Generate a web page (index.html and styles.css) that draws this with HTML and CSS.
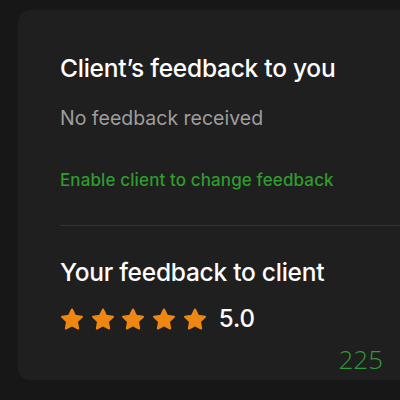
FILE: index.html
```html
<!DOCTYPE html>
<html lang="en">
<head>
<meta charset="utf-8">
<link rel="stylesheet" href="styles.css">
</head>
<body>
  <section class="card">
    <div class="block">
      <h2 class="title">Client’s feedback to you</h2>
      <p class="muted">No feedback received</p>
      <a class="link" href="#">Enable client to change feedback</a>
    </div>
    <hr class="divider">
    <div class="block">
      <h2 class="title title-second">Your feedback to client</h2>
      <div class="rating">
        <div class="stars">
          <svg class="star" viewBox="0 0 24 24"><path d="M12 2.5L15.1 8.7 21.99 9.76 16.98 14.62 18.17 21.49 12 18.3 5.83 21.49 7.02 14.62 2.01 9.76 8.9 8.7Z"/></svg>
          <svg class="star" viewBox="0 0 24 24"><path d="M12 2.5L15.1 8.7 21.99 9.76 16.98 14.62 18.17 21.49 12 18.3 5.83 21.49 7.02 14.62 2.01 9.76 8.9 8.7Z"/></svg>
          <svg class="star" viewBox="0 0 24 24"><path d="M12 2.5L15.1 8.7 21.99 9.76 16.98 14.62 18.17 21.49 12 18.3 5.83 21.49 7.02 14.62 2.01 9.76 8.9 8.7Z"/></svg>
          <svg class="star" viewBox="0 0 24 24"><path d="M12 2.5L15.1 8.7 21.99 9.76 16.98 14.62 18.17 21.49 12 18.3 5.83 21.49 7.02 14.62 2.01 9.76 8.9 8.7Z"/></svg>
          <svg class="star" viewBox="0 0 24 24"><path d="M12 2.5L15.1 8.7 21.99 9.76 16.98 14.62 18.17 21.49 12 18.3 5.83 21.49 7.02 14.62 2.01 9.76 8.9 8.7Z"/></svg>
        </div>
        <span class="score">5.0</span>
      </div>
    </div>
    <div class="footer">
      <span class="count">225</span>
    </div>
  </section>
</body>
</html>
```
FILE: styles.css
```css
html, body {
  margin: 0;
  padding: 0;
  background: #171717;
  width: 400px;
  height: 400px;
  overflow: hidden;
  font-family: Inter, "Liberation Sans", sans-serif;
}

.card {
  box-sizing: border-box;
  margin: 10px 0 0 18px;
  width: 400px;
  height: 370px;
  background: #1f1f1f;
  border-radius: 12px;
  padding-top: 44px;
  display: flex;
  flex-direction: column;
}

.block {
  padding-left: 42px;
}

.title {
  margin: 0;
  color: #ffffff;
  font-size: 24.5px;
  font-weight: 500;
  line-height: 28px;
  letter-spacing: -0.25px;
}

.muted {
  margin: 24px 0 0;
  color: #9e9e9e;
  font-size: 19.5px;
  line-height: 24px;
}

.link {
  display: block;
  margin-top: 40px;
  color: #2e9c2e;
  font-size: 17px;
  font-weight: 500;
  line-height: 20px;
  letter-spacing: 0.12px;
  text-decoration: none;
}

.divider {
  margin: 35px 0 0 42px;
  border: 0;
  height: 1px;
  background: #343434;
}

.title-second {
  margin-top: 32px;
}

.rating {
  display: flex;
  align-items: center;
  gap: 12px;
  margin-top: 19px;
}

.stars {
  display: flex;
  gap: 6.7px;
}

.star {
  width: 24px;
  height: 24px;
  fill: #ee8712;
  stroke: #ee8712;
  stroke-width: 2;
  stroke-linejoin: round;
}

.score {
  color: #ffffff;
  font-size: 24px;
  font-weight: 500;
  line-height: 28px;
}

.footer {
  display: flex;
  justify-content: flex-end;
  padding-right: 35px;
  margin-top: 11px;
}

.count {
  color: #2f9a3a;
  font-family: "Open Sans", sans-serif;
  font-weight: 300;
  font-size: 26px;
  line-height: 30px;
}
```
